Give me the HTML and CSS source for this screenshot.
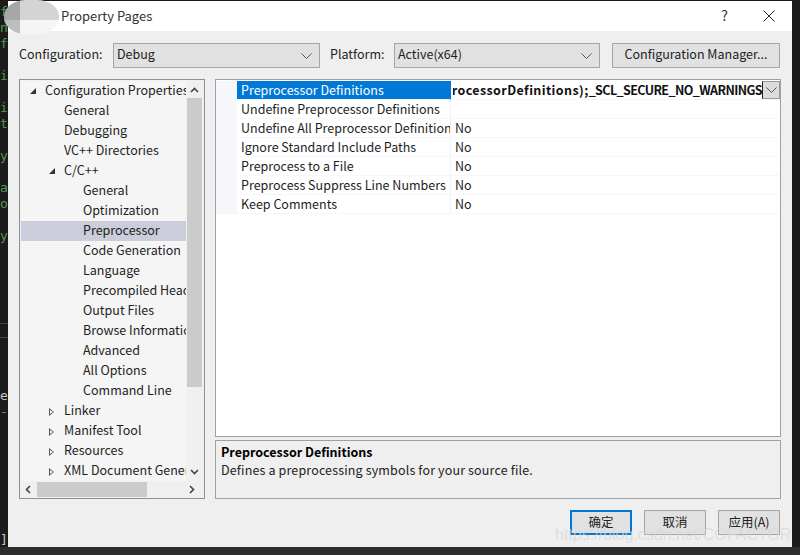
FILE: index.html
```html
<!DOCTYPE html>
<html>
<head>
<meta charset="utf-8">
<title>Property Pages</title>
<link rel="stylesheet" href="styles.css">
</head>
<body>
<div class="desktop">
  <pre class="code">f
n
f

i

i
t

y

a
o

y









<span class="plain">e</span>
<span class="dim">-</span>







<span class="plain">]</span></pre>
  <div class="editor-lines"></div>
  <main class="dialog">
    <header class="titlebar">
      <span class="title">Property Pages</span>
      <span class="help">?</span>
      <svg class="close" width="12" height="12" viewBox="0 0 12 12"><path d="M.5.5l11 11M11.5.5l-11 11" stroke="#222" fill="none"/></svg>
    </header>
    <section class="config">
      <label class="cfg-label">Configuration:</label>
      <div class="select sel-config"><span>Debug</span><svg class="chev" width="11" height="6" viewBox="0 0 11 6"><path d="M.5.5l5 5 5-5" stroke="#555" fill="none"/></svg></div>
      <label class="cfg-label plat-label">Platform:</label>
      <div class="select sel-plat"><span>Active(x64)</span><svg class="chev" width="11" height="6" viewBox="0 0 11 6"><path d="M.5.5l5 5 5-5" stroke="#555" fill="none"/></svg></div>
      <button class="btn btn-manager">Configuration Manager...</button>
    </section>
    <section class="panes">
      <nav class="tree">
        <div class="tree-body">
          <ul class="rows">
            <li class="row l0"><i class="tri open"></i><span>Configuration Properties</span></li>
            <li class="row l1"><span>General</span></li>
            <li class="row l1"><span>Debugging</span></li>
            <li class="row l1"><span>VC++ Directories</span></li>
            <li class="row l1"><i class="tri open"></i><span>C/C++</span></li>
            <li class="row l2"><span>General</span></li>
            <li class="row l2"><span>Optimization</span></li>
            <li class="row l2 selected"><span>Preprocessor</span></li>
            <li class="row l2"><span>Code Generation</span></li>
            <li class="row l2"><span>Language</span></li>
            <li class="row l2"><span>Precompiled Headers</span></li>
            <li class="row l2"><span>Output Files</span></li>
            <li class="row l2"><span>Browse Information</span></li>
            <li class="row l2"><span>Advanced</span></li>
            <li class="row l2"><span>All Options</span></li>
            <li class="row l2"><span>Command Line</span></li>
            <li class="row l1"><i class="tri closed"></i><span>Linker</span></li>
            <li class="row l1"><i class="tri closed"></i><span>Manifest Tool</span></li>
            <li class="row l1"><i class="tri closed"></i><span>Resources</span></li>
            <li class="row l1"><i class="tri closed"></i><span>XML Document Generator</span></li>
          </ul>
          <div class="vscroll">
            <svg width="9" height="6" viewBox="0 0 9 6"><path d="M1 5l3.500-3.500L8 5" stroke="#444" stroke-width="1.600" fill="none"/></svg>
            <div class="vtrack"><div class="vthumb"></div></div>
            <svg width="9" height="6" viewBox="0 0 9 6"><path d="M1 1l3.500 3.500L8 1" stroke="#444" stroke-width="1.600" fill="none"/></svg>
          </div>
        </div>
        <div class="hscroll">
          <svg width="6" height="9" viewBox="0 0 6 9"><path d="M5 1L1.500 4.500 5 8" stroke="#444" stroke-width="1.600" fill="none"/></svg>
          <div class="htrack"><div class="hthumb"></div></div>
          <svg width="6" height="9" viewBox="0 0 6 9"><path d="M1 1l3.500 3.500L1 8" stroke="#444" stroke-width="1.600" fill="none"/></svg>
        </div>
      </nav>
      <div class="right">
        <div class="grid">
          <div class="prop active"><div class="name">Preprocessor Definitions</div><div class="value editor"><span class="value-text"><span class="val-inner"><span class="val-lower">%(PreprocessorDefinitions);</span><span class="val-caps">_SCL_SECURE_NO_WARNINGS</span></span></span><span class="drop"><svg width="11" height="6" viewBox="0 0 11 6"><path d="M.5.5l5 5 5-5" stroke="#555" fill="none"/></svg></span></div></div>
          <div class="prop"><div class="name">Undefine Preprocessor Definitions</div><div class="value"></div></div>
          <div class="prop"><div class="name">Undefine All Preprocessor Definitions</div><div class="value">No</div></div>
          <div class="prop"><div class="name">Ignore Standard Include Paths</div><div class="value">No</div></div>
          <div class="prop"><div class="name">Preprocess to a File</div><div class="value">No</div></div>
          <div class="prop"><div class="name">Preprocess Suppress Line Numbers</div><div class="value">No</div></div>
          <div class="prop"><div class="name">Keep Comments</div><div class="value">No</div></div>
        </div>
        <div class="desc">
          <strong>Preprocessor Definitions</strong>
          <p>Defines a preprocessing symbols for your source file.</p>
        </div>
      </div>
    </section>
    <footer class="actions">
      <button class="btn action default">确定</button>
      <button class="btn action">取消</button>
      <button class="btn action">应用(A)</button>
    </footer>
  </main>
</div>
<div class="blob"><i></i><i></i><i></i><i></i></div>
<div class="watermark">https://blog.csdn.net/COFACTOR</div>
</body>
</html>
```
FILE: styles.css
```css
* { box-sizing: border-box; }
html, body { margin: 0; padding: 0; }
body {
  width: 800px; height: 555px; overflow: hidden; position: relative;
  background: #2d2d30;
  font: 12.5px/1 "Noto Sans CJK SC", "Noto Sans", sans-serif;
  color: #1e1e1e;
}
.desktop {
  height: 547px; display: flex; padding-top: 1px; padding-right: 8px;
  background: #1b1b1b; position: relative;
}
.code {
  width: 8px; margin: 0; overflow: hidden; flex: none; padding-top: 3px;
  font: 13px/16px "DejaVu Sans Mono", monospace; color: #4e9a4e;
}
.plain { color: #c8c8c8; }
.dim { color: #888; }
.editor-lines {
  position: absolute; left: 0; top: 323px; width: 8px; height: 15px;
  border-top: 1px solid #444; border-bottom: 1px solid #444;
}
.dialog { width: 784px; flex: none; background: #efefef; display: flex; flex-direction: column; }
.titlebar { height: 30px; background: #fff; display: flex; align-items: center; padding: 0 17px 2px 53px; }
.title { font-size: 13px; flex: 1; color: #333; }
.help { font-size: 14px; margin-right: 35px; color: #333; }
.close { margin-top: 1px; }
.config { display: flex; align-items: center; height: 24px; margin-top: 12px; padding-left: 11px; }
.cfg-label { width: 94px; flex: none; color: #222; padding-bottom: 2px; }
.plat-label { width: 64px; margin-left: 10px; }
.select {
  height: 25px; margin-top: 1px; background: #e1e1e1; border: 1px solid #a6a6a6;
  display: flex; align-items: center; justify-content: space-between; padding: 0 3px 2px 3px; flex: none;
}
.sel-config { width: 207px; }
.sel-plat { width: 206px; }
.chev { margin-right: 4px; margin-top: 2px; }
.btn {
  font: inherit; color: #222; background: #e1e1e1; border: 1px solid #a6a6a6; padding: 0 0 2px;
}
.btn-manager { width: 168px; height: 25px; margin-left: 12px; flex: none; }
.panes { display: flex; gap: 10px; margin: 12px 11px 0; height: 420px; }
.tree { width: 186px; flex: none; border: 1px solid #8f8f8f; background: #f0f0f0; padding: 1px; display: flex; flex-direction: column; }
.tree-body { height: 400px; display: flex; }
.rows { list-style: none; margin: 0; padding: 0; width: 165px; background: #f5f5f5; overflow: hidden; }
.row { height: 20px; display: flex; align-items: center; white-space: nowrap; position: relative; padding-bottom: 2px; }
.l0 { padding-left: 24px; }
.l1 { padding-left: 43px; }
.l2 { padding-left: 62px; }
.selected { background: #cbcdda; }
.tri { position: absolute; }
.tri.open { width: 0; height: 0; border-style: solid; border-width: 0 0 6px 6px; border-color: transparent transparent #333 transparent; }
.l0 .tri { left: 9px; top: 7px; }
.l1 .tri { left: 28px; top: 7px; }
.tri.closed { width: 0; height: 0; border-style: solid; border-width: 4px 0 4px 5px; border-color: transparent transparent transparent #555; }
.tri.closed::after { content: ""; position: absolute; left: -4px; top: -2.500px; width: 0; height: 0; border-style: solid; border-width: 2.500px 0 2.500px 3px; border-color: transparent transparent transparent #f5f5f5; }
.vscroll { width: 15px; margin-left: 1px; flex: none; display: flex; flex-direction: column; align-items: center; padding: 6px 0; justify-content: space-between; }
.vtrack { flex: 1; width: 100%; margin-top: 4px; margin-bottom: 4px; }
.vthumb { height: 289px; background: #cbcbcb; margin-top: 1px; }
.hscroll { height: 17px; display: flex; align-items: center; padding: 0 8px 0 4px; }
.htrack { flex: 1; margin: 0 6px 0 6px; height: 15px; }
.hthumb { width: 110px; height: 100%; background: #cbcbcb; }
.right { flex: 1; min-width: 0; display: flex; flex-direction: column; gap: 3px; }
.grid {
  height: 358px; background: #fff; border: 1px solid #a0a0a0;
  padding-top: 1px;
}
.prop { height: 19px; display: flex; position: relative; }
.name { width: 235px; padding-left: 4px; flex: none; white-space: nowrap; overflow: hidden; border-left: 21px solid #f5f7fb; border-bottom: 1px solid #f5f7fb; line-height: 18px; border-right: 1px solid #f0f2f7; }
.value { flex: 1; min-width: 0; padding-left: 4px; border-bottom: 1px solid #f5f7fb; line-height: 18px; }
.active .name { background: #0078d7; background-clip: padding-box; color: #fff; border-right-color: #0078d7; }
.editor { padding: 0 0 0 2px; font-weight: 700; color: #111; display: flex; }
.value-text { flex: 1; min-width: 0; overflow: hidden; display: flex; justify-content: flex-end; white-space: nowrap; }
.val-inner { flex: none; }
.val-lower { letter-spacing: .4px; }
.val-caps { letter-spacing: -.6px; }
.drop { width: 18px; height: 18px; flex: none; background: #dcdcdc; border: 1px solid #999; border-left-color: #222; display: flex; align-items: center; justify-content: center; }
.desc { height: 59px; background: #efefef; border: 1px solid #a0a0a0; padding: 2px 5px; }
.desc strong { display: block; line-height: 17px; color: #000; }
.desc p { margin: 1px 0 0; line-height: 17px; color: #222; letter-spacing: .15px; }
.actions { display: flex; justify-content: flex-end; gap: 12px; padding: 11px 12px 0 0; }
.action { width: 62px; height: 25px; padding: 0; }
.default { border: 2px solid #0078d7; }
.blob { position: absolute; left: 4px; top: 0; width: 55px; height: 34px; border-radius: 22px / 16px; overflow: hidden; display: grid; grid-template-columns: 16px 39px; grid-template-rows: 20px 14px; }
.blob i:nth-child(1) { background: #a5a8a5; }
.blob i:nth-child(2) { background: #d4d4d4; }
.blob i:nth-child(3) { background: #bcc0bc; }
.blob i:nth-child(4) { background: #f5f5f5; }
.watermark { position: absolute; left: 555px; top: 525px; font: 16px/20px "Liberation Sans", sans-serif; color: rgba(215,215,215,.7); white-space: nowrap; }
```
